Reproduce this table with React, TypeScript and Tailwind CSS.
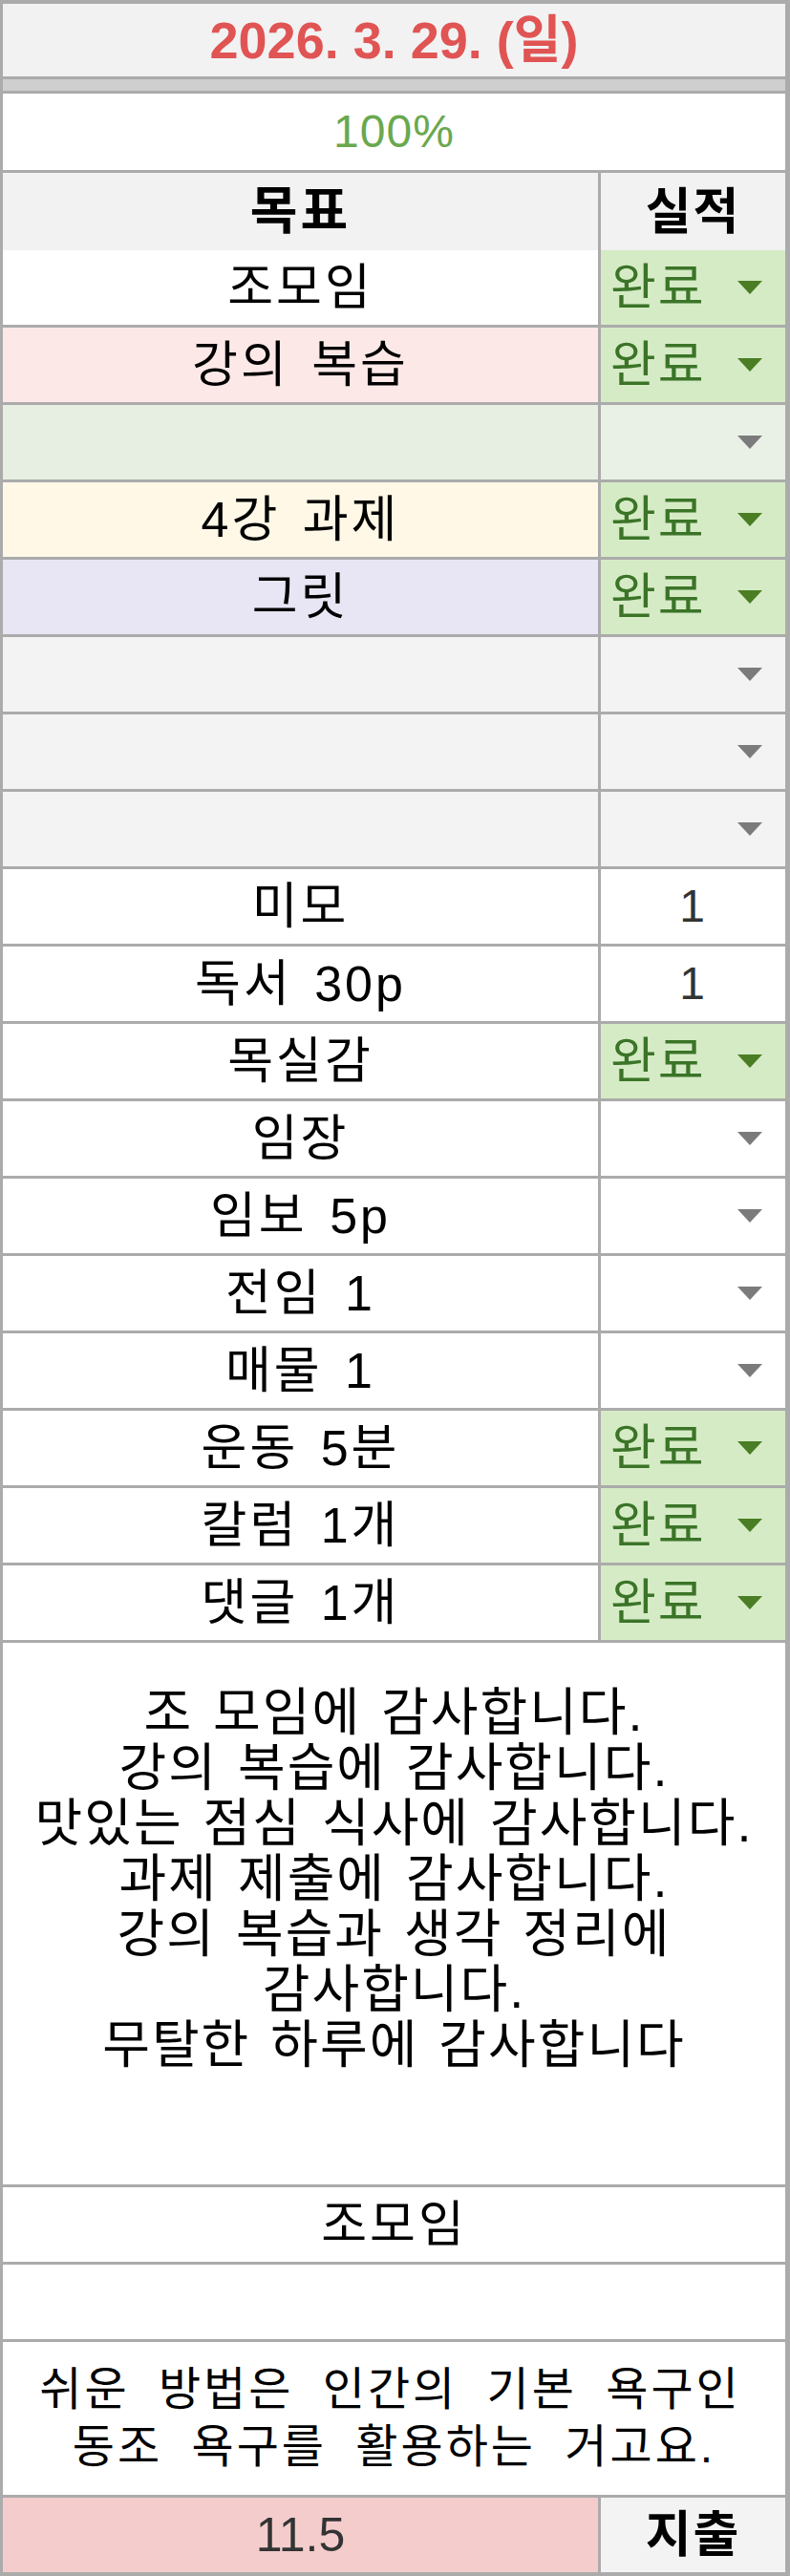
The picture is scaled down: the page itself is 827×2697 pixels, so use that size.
import React from 'react'

type Row = {
  goal: string
  result: string
  bg: string
  rbg: string
  kind: 'done' | 'empty' | 'num'
}

const rows: Row[] = [
  { goal: '조모임', result: '완료', bg: 'bg-white', rbg: 'bg-[#d5ebc5]', kind: 'done' },
  { goal: '강의 복습', result: '완료', bg: 'bg-[#fce9e7]', rbg: 'bg-[#d5ebc5]', kind: 'done' },
  { goal: '', result: '', bg: 'bg-[#e6efe1]', rbg: 'bg-[#e9f1e6]', kind: 'empty' },
  { goal: '4강 과제', result: '완료', bg: 'bg-[#fff8e6]', rbg: 'bg-[#d5ebc5]', kind: 'done' },
  { goal: '그릿', result: '완료', bg: 'bg-[#e8e5f4]', rbg: 'bg-[#d5ebc5]', kind: 'done' },
  { goal: '', result: '', bg: 'bg-[#f3f3f3]', rbg: 'bg-[#f3f3f3]', kind: 'empty' },
  { goal: '', result: '', bg: 'bg-[#f3f3f3]', rbg: 'bg-[#f3f3f3]', kind: 'empty' },
  { goal: '', result: '', bg: 'bg-[#f3f3f3]', rbg: 'bg-[#f3f3f3]', kind: 'empty' },
  { goal: '미모', result: '1', bg: 'bg-white', rbg: 'bg-white', kind: 'num' },
  { goal: '독서 30p', result: '1', bg: 'bg-white', rbg: 'bg-white', kind: 'num' },
  { goal: '목실감', result: '완료', bg: 'bg-white', rbg: 'bg-[#d5ebc5]', kind: 'done' },
  { goal: '임장', result: '', bg: 'bg-white', rbg: 'bg-white', kind: 'empty' },
  { goal: '임보 5p', result: '', bg: 'bg-white', rbg: 'bg-white', kind: 'empty' },
  { goal: '전임 1', result: '', bg: 'bg-white', rbg: 'bg-white', kind: 'empty' },
  { goal: '매물 1', result: '', bg: 'bg-white', rbg: 'bg-white', kind: 'empty' },
  { goal: '운동 5분', result: '완료', bg: 'bg-white', rbg: 'bg-[#d5ebc5]', kind: 'done' },
  { goal: '칼럼 1개', result: '완료', bg: 'bg-white', rbg: 'bg-[#d5ebc5]', kind: 'done' },
  { goal: '댓글 1개', result: '완료', bg: 'bg-white', rbg: 'bg-[#d5ebc5]', kind: 'done' },
]

const thanks = [
  '조 모임에 감사합니다.',
  '강의 복습에 감사합니다.',
  '맛있는 점심 식사에 감사합니다.',
  '과제 제출에 감사합니다.',
  '강의 복습과 생각 정리에',
  '감사합니다.',
  '무탈한 하루에 감사합니다',
]

function Caret({ green }: { green: boolean }) {
  return (
    <svg width="26" height="14" viewBox="0 0 26 14" className="shrink-0">
      <polygon points="0,0 26,0 13,14" fill={green ? '#4a7d24' : '#7b7b7b'} />
    </svg>
  )
}

export default function App() {
  return (
    <div className="w-[827px] h-[2697px] bg-[#ababab] pt-[4px] pl-[3px] pr-[5px] pb-[4px] flex flex-col gap-[3px] font-['Liberation_Sans','Noto_Sans_CJK_KR',sans-serif] text-black">
      {/* date */}
      <div className="h-[76px] bg-[#f2f2f2] flex items-center justify-center">
        <span className="text-[54px] font-bold text-[#e05454]">2026. 3. 29. (일)</span>
      </div>

      <div className="h-[12px] bg-[#cfcfcf]" />

      {/* percent */}
      <div className="h-[80px] bg-white flex items-center justify-center">
        <span className="text-[48px] tracking-[1px] text-[#6aa84f]">100%</span>
      </div>

      {/* header */}
      <div className="h-[78px] grid grid-cols-[623px_193px] gap-x-[3px]">
        <div className="bg-[#f2f2f2] flex items-center justify-center text-[54px] tracking-[3px] font-bold">목표</div>
        <div className="bg-[#f2f2f2] flex items-center justify-center text-[52px] tracking-[2px] font-bold">실적</div>
      </div>

      {rows.map((r, i) => (
        <div key={i} className="h-[78px] grid grid-cols-[623px_193px] gap-x-[3px]">
          <div className={`${r.bg} flex items-center justify-center text-[52px] tracking-[3px] [word-spacing:6px]`}>{r.goal}</div>
          <div className={`${r.rbg} flex items-center`}>
            {r.kind === 'done' && (
              <div className="flex w-full items-center justify-between pl-[10px] pr-[24px]">
                <span className="text-[52px] tracking-[2px] text-[#3b7428]">{r.result}</span>
                <Caret green />
              </div>
            )}
            {r.kind === 'empty' && (
              <div className="flex w-full items-center justify-end pr-[24px]">
                <Caret green={false} />
              </div>
            )}
            {r.kind === 'num' && (
              <div className="flex w-full items-center justify-end pr-[84px] text-[48px] text-[#333]">{r.result}</div>
            )}
          </div>
        </div>
      ))}

      {/* thanks */}
      <div className="h-[567px] bg-white flex flex-col items-center pt-[44px] text-[54px] leading-[58px] tracking-[2px] [word-spacing:4px] whitespace-nowrap">
        {thanks.map((t, i) => (
          <div key={i}>{t}</div>
        ))}
      </div>

      <div className="h-[78px] bg-white flex items-center justify-center text-[52px] tracking-[3px]">조모임</div>
      <div className="h-[78px] bg-white" />

      <div className="h-[160px] bg-white flex flex-col items-center justify-center text-[48px] leading-[60px] tracking-[3px] [word-spacing:14px] whitespace-nowrap">
        <div className="pr-[8px]">쉬운 방법은 인간의 기본 욕구인</div>
        <div>동조 욕구를 활용하는 거고요.</div>
      </div>

      <div className="h-[78px] grid grid-cols-[623px_193px] gap-x-[3px]">
        <div className="bg-[#f4cccc] flex items-center justify-center text-[50px] text-[#333]">11.5</div>
        <div className="bg-[#f3f3f3] flex items-center justify-center text-[52px] tracking-[2px] font-bold">지출</div>
      </div>
    </div>
  )
}
